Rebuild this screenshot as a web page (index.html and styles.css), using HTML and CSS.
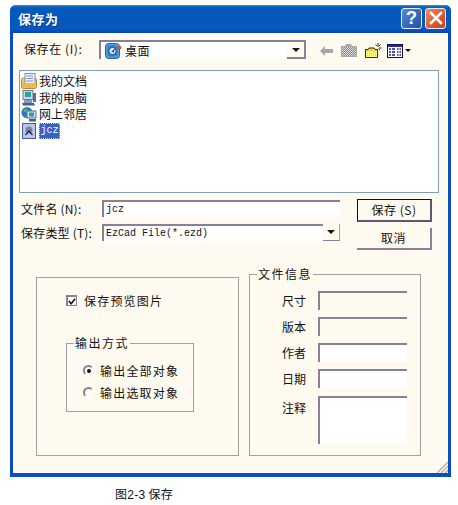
FILE: index.html
```html
<!DOCTYPE html>
<html lang="zh">
<head>
<meta charset="utf-8">
<title>保存为</title>
<link rel="stylesheet" href="styles.css">
</head>
<body>
<div class="window">
  <div class="titlebar">
    <span class="title">保存为</span>
    <div class="title-btns">
      <span class="tbtn help">?</span>
      <span class="tbtn close"><svg width="14" height="14" viewBox="0 0 14 14"><path d="M2 2L12 12M12 2L2 12" stroke="#fff" stroke-width="2.6" stroke-linecap="square"/></svg></span>
    </div>
  </div>
  <div class="client">
    <div class="lookin">
      <span class="lookin-label">保存在 (I):</span>
      <div class="combo combo-top">
        <svg class="ico" width="16" height="16" viewBox="0 0 16 16"><rect x="0.5" y="0.5" width="14" height="15" rx="3" fill="#4f9fe0" stroke="#34608c"/><rect x="2.5" y="2.5" width="10" height="11" rx="2" fill="#2f7cc8"/><circle cx="7.5" cy="8" r="3.6" fill="#f2f8ff" stroke="#164f90"/><path d="M6 9L10 5L8.8 9.4Z" fill="#164f90"/><rect x="13" y="3" width="3" height="3" fill="#e04a2a"/></svg>
        <span class="combo-text">桌面</span>
        <span class="drop"><i class="caret"></i></span>
      </div>
      <div class="tools">
        <svg width="13" height="10" viewBox="0 0 13 10"><path d="M0 5L5 0V3H13V7H5V10Z" fill="#a6a6a6"/></svg>
        <svg width="16" height="13" viewBox="0 0 16 13"><defs><pattern id="dots" width="2" height="2" patternUnits="userSpaceOnUse"><rect width="2" height="2" fill="#d8d8d8"/><rect width="1" height="1" fill="#8c8c8c"/><rect x="1" y="1" width="1" height="1" fill="#8c8c8c"/></pattern></defs><path d="M0 2H4L5 0H10L11 2H16V13H0Z" fill="#a8a8a8"/><path d="M1 3H15V12H1Z" fill="url(#dots)"/></svg>
        <svg width="17" height="15" viewBox="0 0 17 15"><defs><pattern id="yel" width="2" height="2" patternUnits="userSpaceOnUse"><rect width="2" height="2" fill="#ffff70"/><rect width="1" height="1" fill="#e8d840"/></pattern></defs><path d="M0.5 6.5H3L4 5H9L10 6.5H12.5V14.5H0.5Z" fill="#ecd840" stroke="#2a2a10"/><path d="M1 8H12V14H1Z" fill="url(#yel)"/><path d="M13 0V3M10.5 1.5L12.5 3.5M15.5 1.5L13.5 3.5M16.5 5H14M15 7L13.5 5.5" stroke="#333" stroke-width="1"/></svg>
        <svg class="views" width="16" height="14" viewBox="0 0 16 14"><rect x="0.5" y="0.5" width="15" height="13" fill="#fff" stroke="#10105a"/><rect x="1" y="1" width="14" height="2" fill="#2a2a9a"/><path d="M2 5H4M5 5H8M10 5H11.5M12.5 5H14M2 8H4M5 8H8M10 8H11.5M12.5 8H14M2 11H4M5 11H8M10 11H11.5M12.5 11H14" stroke="#1a1a9a" stroke-width="1.4"/></svg>
        <i class="caret views-caret"></i>
      </div>
    </div>

    <div class="filelist">
      <div class="file">
        <svg width="16" height="16" viewBox="0 0 16 16"><rect x="0.5" y="5" width="15" height="10.5" rx="2" fill="#f4c868" stroke="#b88a30"/><rect x="4" y="0.5" width="10" height="11" fill="#eef3fb" stroke="#7a90b8"/><path d="M5.5 3H12M5.5 5.5H12M5.5 8H12" stroke="#7a90b8"/><rect x="1" y="10" width="14" height="5" fill="#f0b850"/></svg>
        <span class="fname">我的文档</span>
      </div>
      <div class="file">
        <svg width="16" height="16" viewBox="0 0 16 16"><rect x="2" y="0.5" width="10" height="9" fill="#cdd8e8" stroke="#6a7a90"/><rect x="4" y="2" width="6" height="5" fill="#2f9e9e"/><path d="M3 10H11V13H3Z" fill="#8c9cb0"/><path d="M1 13H13L14 15.5H2Z" fill="#3a5fa8"/><rect x="12" y="3" width="3" height="9" fill="#5a708c"/></svg>
        <span class="fname">我的电脑</span>
      </div>
      <div class="file">
        <svg width="16" height="16" viewBox="0 0 16 16"><circle cx="6" cy="6.5" r="5.5" fill="#2f78c0"/><path d="M2 4C4 2 7 3 8 5C6 7 4 7 2 4Z" fill="#5cb85c"/><rect x="6" y="5" width="9" height="7" fill="#d4e0ee" stroke="#5a708c"/><rect x="8" y="6.5" width="5" height="4" fill="#2f9e9e"/><path d="M8 13H15V15.5H8Z" fill="#4a6088"/></svg>
        <span class="fname">网上邻居</span>
      </div>
      <div class="file">
        <svg width="16" height="16" viewBox="0 0 16 16"><rect x="1.5" y="0.5" width="13" height="15" fill="#b8c8ea" stroke="#4a5a98"/><circle cx="8" cy="7" r="3.5" fill="#7a80a8"/><path d="M4.5 12L8 8L11.5 12" fill="none" stroke="#2a2a5a" stroke-width="1.4"/></svg>
        <span class="fname mono selected">jcz</span>
      </div>
    </div>

    <div class="formrow">
      <div class="fields">
        <div class="field">
          <span class="flabel">文件名 (N):</span>
          <div class="sunken wide mono value">jcz</div>
        </div>
        <div class="field">
          <span class="flabel">保存类型 (T):</span>
          <div class="combo wide mono value">EzCad File(*.ezd)<span class="drop small"><i class="caret"></i></span></div>
        </div>
      </div>
      <div class="actions">
        <button class="btn default">保存 (S)</button>
        <button class="btn cancel">取消</button>
      </div>
    </div>

    <div class="panels">
      <div class="panel left-panel">
        <label class="check">
          <span class="checkbox"><svg width="9" height="9" viewBox="0 0 9 9"><path d="M1 4L3.5 7L8 1.5" fill="none" stroke="#111" stroke-width="1.8"/></svg></span>
          <span class="clip clip-check">保存预览图片</span>
        </label>
        <div class="group output">
          <span class="legend">输出方式</span>
          <div class="radio"><span class="radio-dot on"></span><span class="clip">输出全部对象</span></div>
          <div class="radio"><span class="radio-dot"></span><span class="clip">输出选取对象</span></div>
        </div>
      </div>
      <div class="group info">
        <span class="legend">文件信息</span>
        <div class="info-grid">
          <span class="ilabel">尺寸</span><div class="sunken disabled"></div>
          <span class="ilabel">版本</span><div class="sunken disabled"></div>
          <span class="ilabel">作者</span><div class="sunken"></div>
          <span class="ilabel">日期</span><div class="sunken"></div>
          <span class="ilabel note">注释</span><div class="sunken notes"></div>
        </div>
      </div>
    </div>
    <svg class="grip" width="12" height="12" viewBox="0 0 12 12"><path d="M12 1L1 12M12 5L5 12M12 9L9 12" stroke="#b5b0a0" stroke-width="1.4"/></svg>
  </div>
</div>
<p class="caption">图<span class="num">2-3</span> 保存</p>
</body>
</html>
```
FILE: styles.css
```css
* { box-sizing: border-box; }
html, body { margin: 0; padding: 0; background: #fff; }
body {
  width: 458px;
  height: 505px;
  overflow: hidden;
  font-family: "Noto Sans CJK SC", "Liberation Sans", sans-serif;
  font-size: 12px;
  line-height: 1;
  color: #111;
}
.window {
  margin: 5px 0 0 10px;
  width: 441px;
  height: 472px;
  display: flex;
  flex-direction: column;
  background: #0a4cc8;
  border-radius: 6px 6px 0 0;
  overflow: hidden;
}
.titlebar {
  height: 28px;
  flex: none;
  display: flex;
  align-items: center;
  justify-content: space-between;
  padding: 0 5px 2px 8px;
  background: linear-gradient(#2f9cc8 0, #1478c4 1px, #0558bc 3px, #0558bc 24px, #0840c0 28px);
}
.title {
  color: #fff;
  font-size: 13px;
  font-weight: 700;
  letter-spacing: 0.5px;
  text-shadow: 1px 1px 0 #0a3a90;
}
.title-btns { display: flex; gap: 3px; }
.tbtn {
  width: 21px;
  height: 21px;
  border: 1px solid #e8eef8;
  border-radius: 3px;
  display: flex;
  align-items: center;
  justify-content: center;
  color: #fff;
}
.help {
  background: linear-gradient(135deg, #5c8ad8, #2f5fb0 70%, #2a50a0);
  font-family: "Liberation Sans", sans-serif;
  font-size: 18px;
  font-weight: 700;
}
.close { background: linear-gradient(135deg, #f08a60, #d8502a 70%, #c84020); }

.client {
  position: relative;
  flex: 1;
  margin: 0 3px 4px;
  background: #fffaf0;
}
.lookin {
  display: flex;
  align-items: center;
  height: 19px;
  margin-top: 7px;
  padding-left: 11px;
}
.lookin-label { width: 75px; flex: none; letter-spacing: 0.6px; padding-bottom: 1px; }
.sunken {
  height: 19px;
  background: #fff;
  border-top: 2px solid #8a7f96;
  border-left: 2px solid #8a7f96;
}
.combo {
  position: relative;
  display: flex;
  align-items: center;
  background: #fff;
  border-top: 2px solid #8a7f96;
  border-left: 2px solid #8a7f96;
}
.combo-top { width: 207px; height: 19px; border-right: 2px solid #8a7f96; padding-left: 4px; }
.ico { flex: none; }
.combo-text { margin-left: 4px; font-size: 12px; letter-spacing: 0.5px; }
.drop {
  position: absolute;
  right: 0;
  bottom: 0;
  width: 17px;
  height: 17px;
  background: #fffaf0;
  border-bottom: 2px solid #8a7f96;
  display: flex;
  align-items: center;
  justify-content: center;
}
.drop.small { border-right: 1px solid #a8a0ac; border-bottom-width: 1px; }
.caret {
  width: 0;
  height: 0;
  border-left: 4px solid transparent;
  border-right: 4px solid transparent;
  border-top: 4px solid #111;
}
.tools {
  display: flex;
  align-items: center;
  margin-left: 14px;
  margin-top: 2px;
  gap: 8px;
}
.views { margin-left: -3px; }
.views-caret {
  margin-left: -6px;
  border-left-width: 3px;
  border-right-width: 3px;
  border-top-width: 3px;
}
.filelist {
  margin: 11px 0 0 6px;
  width: 420px;
  height: 123px;
  background: #fff;
  border: 1px solid #7f9db9;
  padding: 2px 0 0 1px;
  display: flex;
  flex-direction: column;
  gap: 0.5px;
}
.file {
  display: flex;
  align-items: center;
  height: 16px;
  gap: 2px;
}
.fname { letter-spacing: 0; font-size: 12px; }
.selected {
  background: #3a5fc5;
  color: #fff;
  outline: 1px dotted #e8d860;
  outline-offset: -1px;
  width: 21px;
  height: 16px;
  display: flex;
  align-items: center;
  justify-content: center;
  font-size: 10px;
}
.mono { font-family: "Liberation Mono", monospace; font-size: 10px; }

.formrow {
  display: flex;
  align-items: flex-start;
  margin: 6px 0 0 8px;
}
.fields {
  display: flex;
  flex-direction: column;
  gap: 7px;
  margin-top: 1px;
}
.field { display: flex; align-items: center; height: 17px; }
.flabel { width: 81px; flex: none; letter-spacing: 0.2px; }
.wide { width: 238px; height: 17px; padding-left: 2px; }
.value { display: flex; align-items: center; color: #111; }
.actions {
  display: flex;
  flex-direction: column;
  gap: 6px;
  margin-left: 17px;
}
.btn {
  width: 75px;
  font: inherit;
  letter-spacing: 0.5px;
  color: #111;
  background: #fffaf0;
  padding: 0;
}
.default {
  height: 23px;
  border: 1px solid #111;
  border-right: 2px solid #5f5870;
  border-bottom: 2px solid #5f5870;
}
.cancel {
  height: 22px;
  border: 0;
  border-right: 2px solid #8a7f96;
  border-bottom: 2px solid #8a7f96;
}

.panels {
  display: flex;
  align-items: flex-start;
  margin: 24px 0 0 23px;
}
.panel, .group { border: 1px solid #a5a09f; }
.left-panel {
  width: 203px;
  height: 179px;
  margin-top: 3px;
  padding: 16px 0 0 29px;
}
.check { display: flex; align-items: center; height: 13px; }
.checkbox {
  width: 11px;
  height: 11px;
  border: 1px solid #8a7f96;
  border-width: 2px 1px 1px 2px;
  background: #fff;
  display: flex;
  align-items: center;
  justify-content: center;
  flex: none;
}
.clip { display: block; overflow: hidden; white-space: nowrap; letter-spacing: 1.2px; }
.clip-check { width: 78px; margin-left: 7px; }
.group { position: relative; }
.legend {
  position: absolute;
  top: -7px;
  left: 7px;
  padding: 0 1px;
  background: #fffaf0;
  letter-spacing: 1.5px;
}
.output {
  width: 128px;
  height: 69px;
  margin-top: 36px;
  padding: 20px 0 0 16px;
  display: flex;
  flex-direction: column;
  gap: 9px;
}
.radio { display: flex; align-items: center; height: 13px; }
.radio .clip { width: 78px; margin-left: 6px; }
.radio-dot {
  width: 11px;
  height: 11px;
  border-radius: 50%;
  border: 2px solid #8a7f96;
  border-right-color: #fffaf0;
  border-bottom-color: #fffaf0;
  background: #fff;
  flex: none;
  position: relative;
  display: flex;
  align-items: center;
  justify-content: center;
}
.radio-dot.on::after {
  content: "";
  width: 4px;
  height: 4px;
  border-radius: 50%;
  background: #111;
}
.info {
  width: 172px;
  height: 182px;
  margin-left: 10px;
  padding: 16px 0 0 0;
}
.info-grid {
  display: grid;
  grid-template-columns: 56px 89px;
  column-gap: 12px;
  row-gap: 7px;
  align-items: center;
}
.ilabel { text-align: right; font-size: 12px; letter-spacing: 0; }
.disabled { background: #fffaf0; }
.notes { height: 48px; margin-top: 1px; }
.note { align-self: start; padding-top: 7px; }
.grip { position: absolute; right: 0; bottom: 0; }

.caption {
  margin: 11px 0 0 115px;
  font-size: 12px;
  letter-spacing: 0.3px;
}
.num { font-family: "Liberation Sans", sans-serif; }
```
